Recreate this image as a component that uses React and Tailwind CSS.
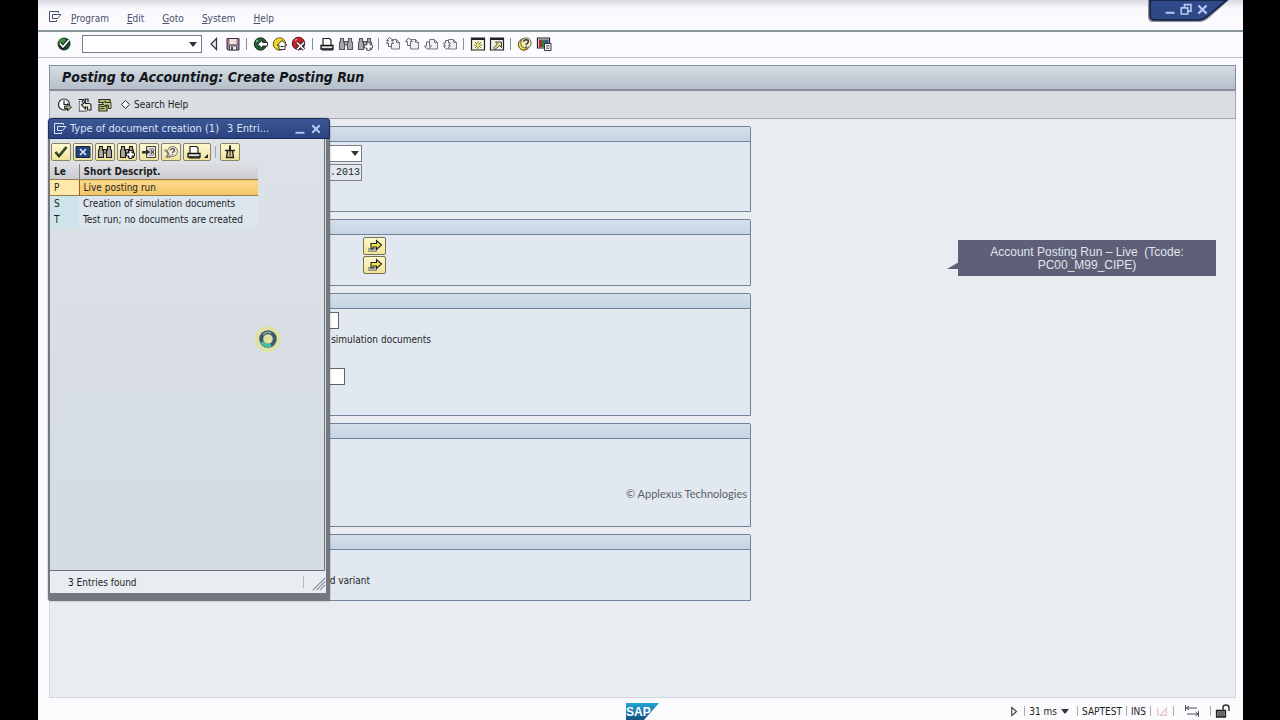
import React, { useState } from 'react';
import { clsx } from 'clsx';

/* ---------- Icons ---------- */

function Svg({ size = 16, className, children }) {
  return (
    <svg width={size} height={size} viewBox="0 0 16 16" fill="none" className={className} aria-hidden="true">
      {children}
    </svg>
  );
}

const MenuIcon = () => (
  <Svg>
    <path d="M11.500 4V2.500h-9v10h7V11" stroke="currentColor" />
    <path d="M5.500 5.500H14L10.500 9.500h-5z" stroke="currentColor" />
  </Svg>
);

const EnterIcon = () => (
  <Svg>
    <circle cx="8" cy="8" r="6.500" fill="#1d4a22" />
    <circle cx="7.200" cy="7" r="4.500" fill="#3d8a45" />
    <path d="M4 7.500l3 3.500 6-7" stroke="#111" strokeWidth="3.500" />
    <path d="M4 7.500l3 3.300 6-6.800" stroke="#fff" strokeWidth="1.800" />
  </Svg>
);

const PrevIcon = () => (
  <Svg>
    <path d="M10.500 2.500v11L5 8z" fill="#e4e6ea" stroke="#333" strokeWidth="1.200" />
  </Svg>
);

const SaveIcon = () => (
  <Svg>
    <path d="M2 2.500h12v11.500H3L2 13z" fill="#9b7f93" stroke="#3a2f3c" />
    <path d="M4.500 3h7v5h-7z" fill="#f1e3dc" />
    <path d="M4.500 10h7v4h-7z" fill="#e9e9ee" stroke="#444" strokeWidth=".8" />
    <path d="M6 11h2v3H6z" fill="#444" />
  </Svg>
);

const BackIcon = () => (
  <Svg>
    <circle cx="7.500" cy="8" r="6.200" fill="#245f33" stroke="#12301a" />
    <path d="M5 4l-2 2" stroke="#7cc28a" strokeWidth="1.500" />
    <path d="M14.500 6.500H9.500V4L4.500 8.300l5 4.200V10h5z" fill="#fff" stroke="#222" strokeWidth=".9" />
  </Svg>
);

const ExitIcon = () => (
  <Svg>
    <circle cx="7.500" cy="8" r="6.200" fill="#f0d429" stroke="#6d5c10" />
    <path d="M10 4.500L5.200 9H7v4.500h6V9h1.800z" fill="#fff" stroke="#222" strokeWidth=".9" />
    <path d="M8.500 10.500h3" stroke="#222" />
  </Svg>
);

const CancelIcon = () => (
  <Svg>
    <circle cx="7.500" cy="7.500" r="6.200" fill="#c5202c" stroke="#5e0d13" />
    <path d="M4 4.500l2-1.500" stroke="#f2a0a5" strokeWidth="1.500" />
    <path d="M6 6.500l7 7M13 6.500l-7 7" stroke="#222" strokeWidth="3.400" />
    <path d="M6 6.500l7 7M13 6.500l-7 7" stroke="#fff" strokeWidth="1.700" />
  </Svg>
);

const PrintIcon = () => (
  <Svg>
    <path d="M4 9V2.500h6.500L12 4v5" fill="#fff" stroke="#222" strokeWidth="1.200" />
    <path d="M2 9.500h12v3.500H2z" fill="#e2e2e2" stroke="#111" strokeWidth="1.300" />
    <path d="M3 14h11" stroke="#111" />
  </Svg>
);

const FindIcon = ({ plus, dark }) => (
  <Svg>
    <g fill={dark ? '#a9a99f' : '#a9a9ae'} stroke={dark ? '#1c1c1c' : '#55555a'} strokeWidth="1.100">
      <path d="M2.500 2.500h3V6l1 1v6.500h-5v-7l1-1z" />
      <path d="M10.500 2.500h3V5.500l1 1v7h-5V7l1-1z" />
      <path d="M6.500 5.500h3v3.500h-3z" />
    </g>
    {plus && (
      <path
        d="M10 6.500h3v2.500h2.500v3H13v2.500h-3V12H7.500V9H10z"
        fill="#fff"
        stroke={dark ? '#1c1c1c' : '#66666a'}
      />
    )}
  </Svg>
);

const PageIcon = ({ arrow }) => (
  <Svg>
    <path d="M6.500 3.500h5l3 3v6.500h-8z" fill="#f1f1f5" stroke="#77777d" />
    <path d="M11.500 3.500v3h3" stroke="#77777d" />
    <path d={arrow} fill="#f8f8fa" stroke="#66666c" />
  </Svg>
);

const pageArrows = {
  first: 'M4.500 1.500L1.500 4.500h2L1.500 7.500h2v3h3v-3h2L6.500 4.500h2z',
  prev: 'M4.500 2L1.500 5.500h2v4h3v-4h2z',
  next: 'M4.500 13.500l-3-3.500h2V6h3v4h2z',
  last: 'M4.500 13.500l-3-3.500h2L1.500 7h2V4.500h3V7h2l-2 3h2z',
};

const SessionIcon = () => (
  <Svg>
    <path d="M1.500 2h13v12h-13z" fill="#f4f3dc" stroke="#222" strokeWidth="1.200" />
    <path d="M1.500 3h13" stroke="#222" strokeWidth="2" />
    <path d="M8 5v8M4 9h8M5 6l6 6M11 6l-6 6" stroke="#77702c" strokeWidth=".9" />
    <circle cx="8" cy="9" r="1.500" fill="#ffec5a" />
  </Svg>
);

const ShortcutIcon = () => (
  <Svg>
    <path d="M1.500 2h13v12h-13z" fill="#eef0ea" stroke="#222" strokeWidth="1.200" />
    <path d="M1.500 3h13" stroke="#222" strokeWidth="2" />
    <path d="M6.500 6h6v5.500l-2-2L6 13.500 4.500 12l4-4z" fill="#ece48a" stroke="#333" strokeWidth=".9" />
  </Svg>
);

const HelpIcon = () => (
  <Svg>
    <circle cx="7" cy="8.500" r="5.700" fill="#f2dc3c" stroke="#4a4318" />
    <circle cx="9" cy="7" r="5.200" fill="#f7efb9" stroke="#555" strokeWidth=".9" />
    <path d="M6.800 5.800c0-2.600 4.600-2.600 4.600 0 0 1.500-2.300 1.500-2.300 3.200M9.100 10.300v1.400" stroke="#333" strokeWidth="1.500" />
  </Svg>
);

const LayoutIcon = () => (
  <Svg>
    <path d="M1.500 2h12v10h-12z" fill="#dcdcdc" stroke="#222" strokeWidth="1.200" />
    <path d="M3 3.500h3V11H3z" fill="#a82a36" />
    <path d="M6 3.500h3V11H6z" fill="#2f7f42" />
    <path d="M9 3.500h3.500V7H9z" fill="#334b9c" />
    <path d="M8.500 7.500h6.500v7H8.500z" fill="#fff" stroke="#333" />
    <path d="M10 9.500h3.500M10 11h3.500M10 12.500h3.500" stroke="#555" strokeWidth=".8" />
  </Svg>
);

const ExecuteIcon = () => (
  <Svg>
    <circle cx="7" cy="7.500" r="5.500" fill="#fff" stroke="#222" strokeWidth="1.200" />
    <path d="M7 3.500v4h3.500" stroke="#222" strokeWidth="1.200" />
    <path d="M7.500 9H10.500V6.500l4 3.500-4 4v-2.500h-3z" fill="#9aa380" stroke="#222" strokeWidth=".9" />
  </Svg>
);

const VariantIcon = () => (
  <Svg>
    <path d="M2.500 4V14h7" stroke="#222" strokeWidth="1.200" />
    <path d="M2.500 4.500h7v9h-7z" fill="#f3f3ee" />
    <path d="M1.500 2.500h5L5 5.500M7.500 4.500l1-2.500h2.500v3" stroke="#222" strokeWidth="1.200" />
    <path d="M4.500 8l4-3.500V6.500h3.500q2 0 2 2v4.500h-3.500V10H8.500v2z" fill="#e8e8d6" stroke="#222" strokeWidth="1.100" />
  </Svg>
);

const SelectionIcon = () => (
  <Svg>
    <path d="M2 2.500h11v3H2zM2 7.500h8V14H2z" fill="#b8c27a" stroke="#2c3113" strokeWidth="1.200" />
    <path d="M3.500 9.500h4M3.500 11.500h4" stroke="#2c3113" />
    <path d="M5.500 6.500L8.500 4v1.500H14v6h-2.500V8h-3v1.500z" fill="#c3cba0" stroke="#2c3113" strokeWidth=".9" />
  </Svg>
);

const CheckIcon = () => (
  <Svg>
    <path d="M2.500 8l3.500 4 7.500-9" stroke="#23301a" strokeWidth="2.600" />
    <path d="M3 8l3 3.200L13 3.500" stroke="#587a3a" strokeWidth=".8" />
  </Svg>
);

const CloseBoxIcon = () => (
  <Svg>
    <path d="M1 2.500h14v11H1z" fill="#27437f" stroke="#14244a" />
    <path d="M5 5l6 6M11 5l-6 6" stroke="#e4ecfa" strokeWidth="1.500" />
  </Svg>
);

const RestrictIcon = () => (
  <Svg>
    <path d="M5.500 2.500h9v11h-9z" fill="#e6e6e0" stroke="#444" />
    <path d="M8 5h5M8 11h5M8 8h5" stroke="#777" />
    <path d="M1 7h4V4.500L9 8l-4 3.500V9.500H1z" fill="#333" />
    <path d="M10 6l3 4M13 6l-3 4" stroke="#333" />
  </Svg>
);

const TechHelpIcon = () => (
  <Svg>
    <circle cx="9.500" cy="7.500" r="5" fill="#eee9d2" stroke="#777" />
    <path d="M7.500 6.300c0-2.300 4-2.300 4 0 0 1.300-2 1.300-2 2.700M9.500 10v1.200" stroke="#555" strokeWidth="1.300" />
    <path d="M1.500 5.500l4 4-2 3.500h4" stroke="#777" strokeWidth="1.500" />
  </Svg>
);

const PinIcon = () => (
  <Svg>
    <path d="M8 1.500v5" stroke="#222" strokeWidth="2" />
    <path d="M3 6.500h10M5.500 7L4.500 13.500h7L10.500 7" fill="#d8cf8e" stroke="#222" strokeWidth="1.400" />
    <path d="M8 7v5" stroke="#222" />
  </Svg>
);

const MultiSelectIcon = () => (
  <Svg>
    <path d="M1.500 10.500h8v3h-8z" fill="#b5b5b0" stroke="#8a8a80" strokeWidth=".8" />
    <path d="M4 5.500h5.500V2.500L14.500 7l-5 4.500V9H6v2H4z" fill="#f5e34a" stroke="#222" strokeWidth="1.100" />
  </Svg>
);

const DownArrow = ({ className }) => (
  <svg width="8" height="5" viewBox="0 0 8 5" className={className} aria-hidden="true">
    <path d="M0 0h8L4 5z" fill="#30343c" />
  </svg>
);

const SapLogo = () => (
  <svg width="34" height="17" viewBox="0 0 34 17" role="img" aria-label="SAP">
    <defs>
      <linearGradient id="sapBlue" x1="0" y1="0" x2="0" y2="1">
        <stop offset="0" stopColor="#22a5d8" />
        <stop offset="1" stopColor="#14527f" />
      </linearGradient>
    </defs>
    <path d="M0 0h33L18 17H0z" fill="url(#sapBlue)" />
    <text x="0" y="13" fill="#fff" fontFamily="Liberation Sans, sans-serif" fontWeight="700" fontSize="12">SAP</text>
  </svg>
);

/* ---------- Data ---------- */

const menuItems = ['Program', 'Edit', 'Goto', 'System', 'Help'];

const toolbarGroups = [
  [
    { label: 'Back one step', icon: <PrevIcon /> },
    { label: 'Save', icon: <SaveIcon /> },
  ],
  [
    { label: 'Back', icon: <BackIcon /> },
    { label: 'Exit', icon: <ExitIcon /> },
    { label: 'Cancel', icon: <CancelIcon /> },
  ],
  [
    { label: 'Print', icon: <PrintIcon /> },
    { label: 'Find', icon: <FindIcon /> },
    { label: 'Find next', icon: <FindIcon plus /> },
  ],
  [
    { label: 'First page', icon: <PageIcon arrow={pageArrows.first} /> },
    { label: 'Previous page', icon: <PageIcon arrow={pageArrows.prev} /> },
    { label: 'Next page', icon: <PageIcon arrow={pageArrows.next} /> },
    { label: 'Last page', icon: <PageIcon arrow={pageArrows.last} /> },
  ],
  [
    { label: 'New session', icon: <SessionIcon /> },
    { label: 'Create shortcut', icon: <ShortcutIcon /> },
  ],
  [
    { label: 'Help', icon: <HelpIcon /> },
    { label: 'Customize layout', icon: <LayoutIcon /> },
  ],
];

const entries = [
  { key: 'P', text: 'Live posting run' },
  { key: 'S', text: 'Creation of simulation documents' },
  { key: 'T', text: 'Test run; no documents are created' },
];

/* ---------- Page parts ---------- */

function MenuBar() {
  return (
    <header className="relative flex h-8 items-center border-b-2 border-[#87959b] bg-linear-to-b from-[#d9dae2] via-[#f9f9fd] via-30% to-[#fcfcff] pt-2 pl-[9px] text-[#48506a]">
      <span className="mb-1 flex w-6">
        <MenuIcon />
      </span>
      <nav className="flex gap-[18px]">
        {menuItems.map((item) => (
          <button key={item} type="button" className="leading-4">
            <span className="underline">{item[0]}</span>
            {item.slice(1)}
          </button>
        ))}
      </nav>

      {/* Window controls hang over the top edge */}
      <div className="absolute top-0 right-2 h-6 w-[88px]">
        <svg width="88" height="24" viewBox="0 0 88 24" className="absolute inset-0" aria-hidden="true">
          <path d="M1 0v17q0 5 5 5h46q6 0 11-5L82 0z" fill="#8c8f9a" />
          <path d="M3 0v15q0 5 5 5h43q6 0 11-5L80 0z" fill="#2f4888" stroke="#141c38" strokeWidth="1.500" />
        </svg>
        <div className="relative flex gap-px pt-px pl-4 text-[#b4c8f4]">
          <button type="button" aria-label="Minimize" className="flex h-4 w-[15px] items-center justify-center">
            <Svg size={13}><path d="M2 12h11" stroke="currentColor" strokeWidth="2.500" /></Svg>
          </button>
          <button type="button" aria-label="Restore" className="flex h-4 w-[15px] items-center justify-center">
            <Svg size={13}>
              <path d="M5.500 6V2h8v8H10M1.500 6h8v7.500h-8z" stroke="currentColor" strokeWidth="2" />
            </Svg>
          </button>
          <button type="button" aria-label="Close" className="flex h-4 w-[15px] items-center justify-center">
            <Svg size={13}><path d="M3 3l10 10M13 3L3 13" stroke="currentColor" strokeWidth="2.800" /></Svg>
          </button>
        </div>
      </div>
    </header>
  );
}

function StandardToolbar() {
  return (
    <div className="flex h-[26px] items-center border-b border-[#b9bcc4] bg-[#fafaff] pb-0.5 pl-[18px]">
      <button type="button" aria-label="Enter" className="mr-[10px] flex w-4">
        <EnterIcon />
      </button>
      <div className="relative mr-0.5">
        <input
          aria-label="Command"
          className="block h-[18px] w-[120px] border border-[#777c86] bg-white px-1 outline-none"
        />
        <DownArrow className="absolute top-[7px] right-[5px]" />
      </div>
      {toolbarGroups.map((group, i) => (
        <div key={i} className="flex items-center">
          {i > 0 && (
            <span className="flex w-[9px] justify-center">
              <span className="h-3 w-px bg-[#8b8f98]" />
            </span>
          )}
          {group.map((item) => (
            <button key={item.label} type="button" aria-label={item.label} className="flex w-[19px] justify-center">
              {item.icon}
            </button>
          ))}
        </div>
      ))}
    </div>
  );
}

function Panel({ className, children }) {
  return (
    <section className={clsx('rounded-t-[2px] border border-[#71839b] bg-[#e1e8f0]', className)}>
      <div className="h-[15px] border-b border-[#71839b] bg-linear-to-b from-[#d5e0eb] to-[#c5d4e3]" />
      {children}
    </section>
  );
}

function SelectionScreen() {
  return (
    <div className="flex w-[695px] max-w-full flex-col gap-[7px]">
      <Panel className="h-[86px]">
        <div className="flex w-[305px] flex-col items-end gap-0.5 pt-[3px]">
          <div className="relative">
            <select
              aria-label="Type of document creation"
              className="block h-[17px] w-[120px] appearance-none border border-[#7b8088] bg-white"
            />
            <DownArrow className="pointer-events-none absolute top-1.5 right-[3px]" />
          </div>
          <input
            aria-label="Posting date"
            defaultValue="31.03.2013"
            className="h-[17px] w-20 border border-[#7b8088] bg-[#e4e9ee] pr-px text-right font-['Liberation_Mono',monospace] outline-none"
          />
        </div>
      </Panel>

      <Panel className="h-[67px]">
        <div className="flex w-[329px] flex-col items-end gap-px pt-0.5">
          {['Payroll areas', 'Run attributes'].map((label) => (
            <button
              key={label}
              type="button"
              aria-label={label}
              className="flex h-[18px] w-[23px] items-center justify-center rounded-[2px] border border-[#77704e] bg-linear-to-b from-[#fdf9cf] to-[#f1e495]"
            >
              <MultiSelectIcon />
            </button>
          ))}
        </div>
      </Panel>

      <Panel className="h-[123px]">
        <div className="flex flex-col gap-0.5 pt-[3px]">
          <div className="flex w-[282px] justify-end">
            <input aria-label="Run name" className="h-[17px] w-20 border border-[#5f646c] bg-white outline-none" />
          </div>
          <p className="h-[17px] w-[374px] text-right leading-[17px]">simulation documents</p>
          <div className="h-4" />
          <div className="flex w-[288px] justify-end">
            <input aria-label="Run text" className="h-[17px] w-20 border border-[#5f646c] bg-white outline-none" />
          </div>
        </div>
      </Panel>

      <Panel className="h-[104px]">
        <p className="pt-[47px] pr-[3px] text-right font-['Lato',sans-serif] text-[11px] leading-4 text-[#5c6066]">
          © Applexus Technologies
        </p>
      </Panel>

      <Panel className="h-[67px]">
        <p className="w-[313px] pt-[22px] text-right leading-[17px]">and variant</p>
      </Panel>
    </div>
  );
}

const dialogButton =
  'flex h-[18px] w-5 items-center justify-center rounded-[2px] border border-[#8c8460] bg-linear-to-b from-[#fdf9d2] to-[#f0e49c]';

function EntriesDialog() {
  const [selected, setSelected] = useState('P');

  return (
    <div
      role="dialog"
      aria-label="Type of document creation"
      className="absolute -top-px -left-0.5 flex h-[483px] w-[282px] flex-col rounded-t-[4px] rounded-b-[3px] border-r-4 border-b-8 border-l-2 border-[#74777d] bg-[#d5dce4] shadow-[0_0_2px_#0006]"
    >
      <div className="-mr-1 -ml-0.5 flex h-[21px] shrink-0 items-center rounded-t-[4px] border border-[#1c2b58] bg-linear-to-b from-[#3c5894] to-[#2b4280] pr-[5px] pl-[3px] text-[11px] text-[#dbe4f5]">
        <MenuIcon />
        <h2 className="flex flex-1 gap-2 pt-px pl-0.5 whitespace-nowrap">
          <span>Type of document creation (1)</span>
          <span>3 Entri...</span>
        </h2>
        <button type="button" aria-label="Minimize" className="flex h-4 w-4 items-center justify-center text-[#b4c8f4]">
          <Svg size={12}><path d="M2 13h12" stroke="currentColor" strokeWidth="2.500" /></Svg>
        </button>
        <button type="button" aria-label="Close" className="flex h-4 w-4 items-center justify-center text-[#b4c8f4]">
          <Svg size={12}><path d="M3 3l10 10M13 3L3 13" stroke="currentColor" strokeWidth="2.800" /></Svg>
        </button>
      </div>

      <div className="mr-px flex-1 border-r border-b border-[#6d737b] bg-linear-to-b from-[#dde1e8] to-[#d4dbe3]">
        <div className="flex h-[25px] items-center gap-0.5 pl-px">
          <button type="button" aria-label="Copy" className={dialogButton}><CheckIcon /></button>
          <button type="button" aria-label="Cancel" className={dialogButton}><CloseBoxIcon /></button>
          <button type="button" aria-label="Find" className={dialogButton}><FindIcon dark /></button>
          <button type="button" aria-label="Find next" className={dialogButton}><FindIcon dark plus /></button>
          <button type="button" aria-label="Restrict values" className={dialogButton}><RestrictIcon /></button>
          <button type="button" aria-label="Technical info" className={dialogButton}><TechHelpIcon /></button>
          <button type="button" aria-label="Print" className={clsx(dialogButton, 'w-7 gap-0.5')}>
            <PrintIcon />
            <svg width="4" height="12" viewBox="0 0 4 12" aria-hidden="true">
              <path d="M4 8v4H0z" fill="#222" />
            </svg>
          </button>
          <span className="mx-0.5 h-3 w-px bg-[#a3a9b2]" />
          <button type="button" aria-label="Hold list" className={dialogButton}><PinIcon /></button>
        </div>

        <table className="w-[208px] table-fixed border-collapse text-left">
          <thead>
            <tr className="h-[15px] bg-linear-to-b from-[#dcdee2] to-[#c9cbd0]">
              <th className="w-[29px] border-r border-[#80858c] p-0 pl-1 leading-[15px]">Le</th>
              <th className="p-0 pl-1 leading-[15px]">Short Descript.</th>
            </tr>
          </thead>
          <tbody>
            {entries.map((entry) => {
              const active = entry.key === selected;
              return (
                <tr
                  key={entry.key}
                  onClick={() => setSelected(entry.key)}
                  className={clsx('h-4', active ? 'border-y border-[#8f8052] bg-linear-to-b from-[#fcd98a] to-[#f2c766]' : 'bg-[#dde6ee]')}
                >
                  <td className={clsx('p-0 pl-1 leading-[15px]', active ? 'border-r border-[#a05a3a] bg-[#fdeaa8]' : 'bg-[#cfe3ea]')}>
                    {entry.key}
                  </td>
                  <td className="p-0 pl-1 leading-[15px] whitespace-nowrap">{entry.text}</td>
                </tr>
              );
            })}
          </tbody>
        </table>
      </div>

      <div className="flex h-[22px] shrink-0 items-center justify-between bg-[#e9edf2] pl-[18px]">
        <span>3 Entries found</span>
        <span className="flex items-center gap-2">
          <span className="h-3 w-px bg-[#b4b9c2]" />
          <Svg size={14} className="mt-1">
            <path d="M1 15L15 1M5 15L15 5M9 15l6-6" stroke="#7f858e" strokeWidth="1.200" />
          </Svg>
        </span>
      </div>

      {/* Busy pointer */}
      <svg width="30" height="30" viewBox="0 0 30 30" className="absolute top-[206px] left-[203px]" aria-hidden="true">
        <circle cx="15" cy="15" r="13" fill="#dfe29a" opacity=".85" />
        <circle cx="15" cy="15" r="6.800" fill="none" stroke="#3f5a6c" strokeWidth="4" />
        <path d="M9 18a6.800 6.800 0 0 0 9 3" fill="none" stroke="#3cc9a4" strokeWidth="3" />
        <path d="M10 11a6.500 6.500 0 0 1 8-2" fill="none" stroke="#8ba0a8" strokeWidth="1.500" />
      </svg>
    </div>
  );
}

function Callout() {
  return (
    <div className="absolute top-[121px] right-[19px] w-[258px] bg-[#605f78] pt-1.5 pb-1 text-center font-['Liberation_Sans',sans-serif] text-[12px] leading-[13px] whitespace-pre text-[#dfe6ec]">
      <svg width="12" height="8" viewBox="0 0 12 8" className="absolute top-[22px] -left-[11px]" aria-hidden="true">
        <path d="M12 0v7H0z" fill="#605f78" />
      </svg>
      {'Account Posting Run – Live  (Tcode:\nPC00_M99_CIPE)'}
    </div>
  );
}

function StatusBar() {
  const divider = <span className="h-2.5 w-px bg-[#a8abb2]" />;
  return (
    <footer className="grid h-[22px] grid-cols-[1fr_auto_1fr] items-center bg-[#fbfbfe] pt-1 pr-3 pl-4">
      <span />
      <SapLogo />
      <div className="flex items-center justify-end gap-1">
        <Svg size={11}><path d="M4 2v12l7-6z" stroke="#333" strokeWidth="1.500" /></Svg>
        {divider}
        <span className="flex items-center gap-1">
          31 ms <DownArrow />
        </span>
        <span className="ml-1 h-2.5 w-px bg-[#a8abb2]" />
        <span>SAPTEST</span>
        {divider}
        <span>INS</span>
        {divider}
        <Svg size={14}><path d="M3 13V5M6 13l7-8v8z" stroke="#e5c3cc" strokeWidth="1.500" /></Svg>
        {divider}
        <Svg className="mx-1.5">
          <path d="M1.500 2v6M2 5h11M5 3L2.500 5 5 7M14.500 8v6M3 11h11M11.500 9l2.500 2-2.500 2" stroke="#4d5158" />
        </Svg>
        {divider}
        <Svg>
          <path d="M1.500 7.500h9V14h-9z" fill="#8a8a88" stroke="#222" strokeWidth="1.300" />
          <path d="M8 7V4.500q0-2.500 3-2.500t3 2.500V8" stroke="#333" strokeWidth="1.500" />
          <path d="M3 10h6M3 12h6" stroke="#444" />
        </Svg>
      </div>
    </footer>
  );
}

export default function App() {
  return (
    <div className="flex min-h-screen bg-black pr-[37px] pl-[38px]">
      <div className="flex flex-1 flex-col bg-[#fafaff] font-['DejaVu_Sans_Condensed','DejaVu_Sans',sans-serif] text-[10px] text-[#1d1f24]">
        <MenuBar />
        <StandardToolbar />

        <main className="mt-[7px] mr-[7px] ml-[11px] flex flex-1 flex-col border-r border-b border-l border-[#d3d7e0] bg-[#e9edf2]">
          <div className="-mx-px flex h-[26px] items-center border border-b-2 border-[#878d96] bg-linear-to-b from-[#d3dde2] to-[#b6bfca] pb-0.5 pl-3">
            <h1 className="text-[14px] leading-5 font-bold text-[#14161b] italic">Posting to Accounting: Create Posting Run</h1>
          </div>
          <div className="-mx-px flex h-7 items-center gap-1 border border-t-0 border-[#9fa4ad] bg-[#dadee2] pl-[7px]">
            <button type="button" aria-label="Execute"><ExecuteIcon /></button>
            <button type="button" aria-label="Get variant"><VariantIcon /></button>
            <button type="button" aria-label="All selections"><SelectionIcon /></button>
            <button type="button" className="ml-1 flex items-center gap-1">
              <svg width="9" height="9" viewBox="0 0 9 9" aria-hidden="true">
                <path d="M4.500.5l4 4-4 4-4-4z" fill="#f4f6f8" stroke="#333" />
              </svg>
              Search Help
            </button>
          </div>

          <div className="relative flex-1 pt-[7px] pb-6 pl-1.5">
            <SelectionScreen />
            <EntriesDialog />
            <Callout />
          </div>
        </main>

        <StatusBar />
      </div>
    </div>
  );
}
